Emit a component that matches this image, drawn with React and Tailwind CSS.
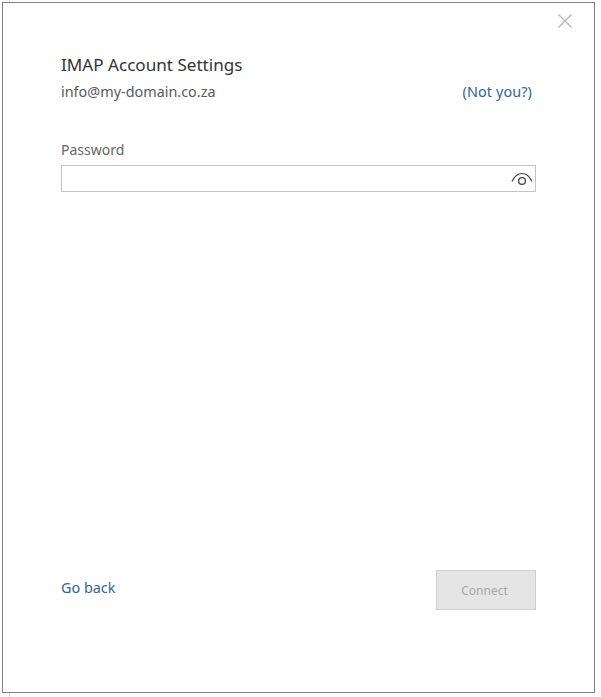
const font = "font-['Noto_Sans',sans-serif]";

function EyeIcon() {
  return (
    <svg width="22" height="14" viewBox="0 0 22 14" fill="none" stroke="#444444" className="block">
      <path d="M1 9.5C3.5 4 7 1.5 11 1.5S18.5 4 21 9.5" strokeWidth="1.2" />
      <circle cx="11" cy="9" r="3.4" strokeWidth="1.3" />
    </svg>
  );
}

function CloseIcon() {
  return (
    <svg width="14" height="14" viewBox="0 0 14 14" stroke="#b4b4b4" strokeWidth="1.3" className="block">
      <path d="M0.5 0.5L13.5 13.5M13.5 0.5L0.5 13.5" />
    </svg>
  );
}

export default function App() {
  return (
    <div className={`relative w-[601px] h-[697px] bg-white pt-[2px] pl-[2px] overflow-hidden ${font}`}>
      {/* edge of the window behind the dialog */}
      <div className="absolute left-[9px] top-0 w-px h-full bg-[#dcdcdc]" />

      <div className="relative w-[593px] h-[691px] border border-[#808080] bg-white flex flex-col">
        {/* close button row */}
        <div className="flex justify-end pt-[11px] pr-[22px]">
          <CloseIcon />
        </div>

        <div className="flex flex-col flex-1 pl-[58px] pr-[58px]">
          <h1 className="mt-[25px] text-[17.1px] leading-[24px] font-normal text-[#333333]">IMAP Account Settings</h1>
          <div className="mt-[5px] flex justify-between pr-[4px] text-[14.4px] leading-[20px]">
            <span className="text-[#5a5a5a]">info@my-domain.co.za</span>
            <a className="text-[#2f6399] tracking-[0.1px]">(Not you?)</a>
          </div>

          <label className="mt-[38px] text-[14px] leading-[20px] text-[#666666]">Password</label>
          <div className="mt-[5px] h-[27px] border border-[#c4c4c4] flex items-center justify-end pr-[2px]">
            <EyeIcon />
          </div>

          <div className="mt-auto mb-[82px] flex justify-between items-start">
            <a className="mt-[8px] text-[14.4px] leading-[20px] text-[#2f6399]">Go back</a>
            <button className="w-[100px] h-[40px] bg-[#e5e5e5] border border-[#cfcfcf] pr-[3px] pt-[1px] text-[12px] text-[#a8a8a8]">
              Connect
            </button>
          </div>
        </div>
      </div>
    </div>
  );
}
